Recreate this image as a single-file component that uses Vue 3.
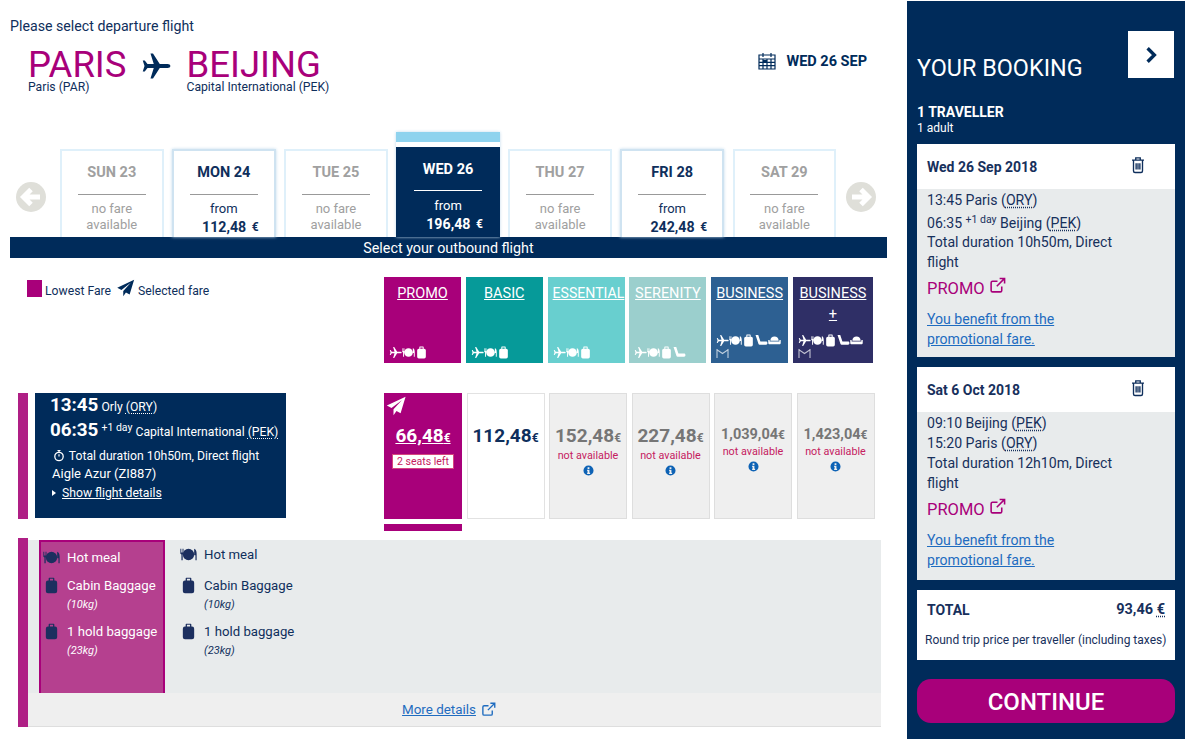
<script setup>
const days = [
  { label: 'SUN 23' },
  { label: 'MON 24', price: '112,48' },
  { label: 'TUE 25' },
  { label: 'WED 26', price: '196,48', active: true },
  { label: 'THU 27' },
  { label: 'FRI 28', price: '242,48' },
  { label: 'SAT 29' },
]

const fares = [
  { name: 'PROMO', cls: 'promo', icons: ['plane', 'meal', 'bag'] },
  { name: 'BASIC', cls: 'basic', icons: ['plane', 'meal', 'bag'] },
  { name: 'ESSENTIAL', cls: 'essential', icons: ['plane', 'meal', 'bag'] },
  { name: 'SERENITY', cls: 'serenity', icons: ['plane', 'meal', 'bag', 'seat'] },
  { name: 'BUSINESS', cls: 'business', icons: ['plane', 'meal', 'bag', 'seat', 'lounge'], crown: true },
  { name: 'BUSINESS', plus: true, cls: 'businessplus', icons: ['plane', 'meal', 'bag', 'seat', 'lounge'], crown: true },
]

const prices = [
  { value: '66,48', cls: 'selected', seats: '2 seats left' },
  { value: '112,48', cls: 'open' },
  { value: '152,48', cls: 'off' },
  { value: '227,48', cls: 'off' },
  { value: '1,039,04', cls: 'off small' },
  { value: '1,423,04', cls: 'off small' },
]

const extras = [
  { icon: 'meal', text: 'Hot meal' },
  { icon: 'bag', text: 'Cabin Baggage', sub: '(10kg)' },
  { icon: 'bag', text: '1 hold baggage', sub: '(23kg)' },
]

const legs = [
  { date: 'Wed 26 Sep 2018', from: '13:45 Paris', fromCode: 'ORY', to: '06:35', nextDay: true, toCity: 'Beijing', toCode: 'PEK', time: '10h50m' },
  { date: 'Sat 6 Oct 2018', from: '09:10 Beijing', fromCode: 'PEK', to: '15:20', toCity: 'Paris', toCode: 'ORY', time: '12h10m' },
]
</script>

<template>
  <svg class="defs" aria-hidden="true">
    <symbol id="plane" viewBox="0 0 24 24"><path d="M23.500 12c0-1-1-1.600-2.200-1.600H15L9.600 2H7.600l2.600 8.400H5.200L3 7.600H1.400L2.800 12 1.400 16.400H3l2.200-2.800h5L7.600 22h2L15 13.600h6.300c1.200 0 2.200-.6 2.200-1.600z" /></symbol>
    <symbol id="meal" viewBox="0 0 24 24"><circle cx="12" cy="12" r="8" /><path d="M.5 4h1v5h1V4h1v5h.8V4H5v7l-1.200 1v8H2v-8L.5 11zM20 4c2 0 3.500 3 3.500 7v9h-1.700v-7H20z" /></symbol>
    <symbol id="bag" viewBox="0 0 24 24"><path d="M9 1h6a1 1 0 0 1 1 1v3h1a3 3 0 0 1 3 3v12a3 3 0 0 1-3 3H7a3 3 0 0 1-3-3V8a3 3 0 0 1 3-3h1V2a1 1 0 0 1 1-1zm.8 1.600V5h4.400V2.600z" /></symbol>
    <symbol id="seat" viewBox="0 0 24 24"><path d="M1 2h5l4 12h10.500c1.500 0 2.500 1.200 2.500 2.800S22 20 20.500 20H8.500c-1 0-1.700-.5-2-1.400z" /></symbol>
    <symbol id="lounge" viewBox="0 0 24 24"><path d="M4.500 11c0-3.500 3.200-6.500 7.500-6.500s7.500 3 7.500 6.500v1.500h-15zM.5 11h2.500v3h18v-3h2.500v5.500c0 1.500-1 2.500-2.500 2.500H3c-1.500 0-2.500-1-2.500-2.500z" /></symbol>
    <symbol id="send" viewBox="0 0 24 24"><path d="M23.500 1 1 11.500l5.600 3L19 5 9 16v7l3.600-5 4.900 2.600z" /></symbol>
    <symbol id="ext" viewBox="0 0 24 24"><path d="M18 13.500V19a2 2 0 0 1-2 2H5a2 2 0 0 1-2-2V8a2 2 0 0 1 2-2h7M15 2h7v7M22 2 11 13" fill="none" stroke="currentColor" stroke-width="2.200" /></symbol>
    <symbol id="info" viewBox="0 0 24 24"><path fill-rule="evenodd" d="M12 1a11 11 0 1 0 0 22 11 11 0 0 0 0-22zm-2 4h4v3.500h-4zm-1 5.500h5V17h1.500v2.500h-6.500V17H10v-4H9z" /></symbol>
    <symbol id="trash" viewBox="0 0 24 24"><path d="M4 5.500h16M9 5V2.500h6V5M6 5.500V20a2 2 0 0 0 2 2h8a2 2 0 0 0 2-2V5.500M9.500 9.500V18M12 9.500V18M14.500 9.500V18" fill="none" stroke="currentColor" stroke-width="1.800" /></symbol>
  </svg>

  <div class="page">
    <main class="main">
      <p class="prompt">Please select departure flight</p>

      <header class="route">
        <div class="city">
          <h1>PARIS</h1>
          <span>Paris (PAR)</span>
        </div>
        <svg class="route-plane"><use href="#plane" /></svg>
        <div class="city">
          <h1>BEIJING</h1>
          <span>Capital International (PEK)</span>
        </div>
        <div class="route-date">
          <svg class="calendar" viewBox="0 0 18 18">
            <path d="M1 3h16v14H1zM1 7h16M5 1v4M13 1v4M1 10.300h16M1 13.600h16M5 7v10M9 7v10M13 7v10" fill="none" stroke="currentColor" stroke-width="1.200" />
            <rect x="5" y="8" width="4" height="3" fill="currentColor" />
          </svg>
          <b>WED 26 SEP</b>
        </div>
      </header>

      <section class="days">
        <div class="arrow">
          <svg viewBox="0 0 30 30"><path d="M24 15H9M15 7.500 7.500 15l7.500 7.500" fill="none" stroke="#fff" stroke-width="5" /></svg>
        </div>
        <div class="day-list">
          <div
            v-for="day in days"
            :key="day.label"
            class="day"
            :class="{ active: day.active, priced: day.price }"
          >
            <strong>{{ day.label }}</strong>
            <template v-if="day.price">
              <span class="from">from</span>
              <span class="amount">{{ day.price }} <small>€</small></span>
            </template>
            <span v-else class="nofare">no fare<br />available</span>
          </div>
        </div>
        <div class="arrow">
          <svg viewBox="0 0 30 30"><path d="M6 15h15M15 7.500l7.500 7.500-7.500 7.500" fill="none" stroke="#fff" stroke-width="5" /></svg>
        </div>
      </section>
      <div class="select-bar">Select your outbound flight</div>

      <section class="fare-head">
        <div class="legend">
          <i class="swatch"></i>
          <span>Lowest Fare</span>
          <svg class="legend-send"><use href="#send" /></svg>
          <span>Selected fare</span>
        </div>
        <div class="fare-tiles">
          <div v-for="fare in fares" :key="fare.cls" class="tile" :class="fare.cls">
            <span class="tile-name">{{ fare.name }}</span>
            <span v-if="fare.plus" class="tile-plus">+</span>
            <div class="tile-icons">
              <svg v-for="(ic, i) in fare.icons" :key="i" class="tile-icon"><use :href="'#' + ic" /></svg>
              <svg v-if="fare.crown" class="tile-crown" viewBox="0 0 14 12">
                <path d="M1 11V2l6 4 6-4v9M1 2h1M12 2h1" fill="none" stroke="currentColor" stroke-width="1.200" />
              </svg>
            </div>
          </div>
        </div>
      </section>

      <section class="flight">
        <i class="flight-mark"></i>
        <div class="flight-card">
          <div class="time-line"><b>13:45</b> <span>Orly <u class="code">(ORY)</u></span></div>
          <div class="time-line second">
            <b>06:35</b> <sup>+1 day</sup> <span>Capital International <u class="code">(PEK)</u></span>
          </div>
          <div class="flight-info total-line">
            <svg class="watch" viewBox="0 0 12 12">
              <circle cx="6" cy="7" r="4.200" fill="none" stroke="currentColor" stroke-width="1.300" />
              <path d="M4.500 1h3M6 1v2M6 7V4.800" fill="none" stroke="currentColor" stroke-width="1.200" />
            </svg>
            Total duration 10h50m, Direct flight
          </div>
          <div class="flight-info carrier">Aigle Azur (ZI887)</div>
          <div class="flight-more"><i class="caret"></i><u>Show flight details</u></div>
        </div>
        <div class="price-list">
          <div v-for="price in prices" :key="price.value" class="price-col">
            <div class="price" :class="price.cls">
              <svg v-if="price.seats" class="price-send"><use href="#send" /></svg>
              <div class="price-value">{{ price.value }}<small>€</small></div>
              <div v-if="price.seats" class="seats">{{ price.seats }}</div>
              <template v-if="price.cls.startsWith('off')">
                <div class="unavailable">not available</div>
                <svg class="info"><use href="#info" /></svg>
              </template>
            </div>
            <i v-if="price.seats" class="price-strip"></i>
          </div>
        </div>
      </section>

      <section class="detail">
        <i class="detail-mark"></i>
        <div class="detail-main">
          <div class="detail-cols">
            <div v-for="col in ['chosen', 'plain']" :key="col" class="extras" :class="col">
              <div v-for="extra in extras" :key="extra.text" class="extra">
                <svg class="extra-icon"><use :href="'#' + extra.icon" /></svg>
                <div>
                  <div class="extra-name">{{ extra.text }}</div>
                  <em v-if="extra.sub">{{ extra.sub }}</em>
                </div>
              </div>
            </div>
          </div>
          <div class="detail-foot">
            <u>More details</u>
            <svg class="foot-ext"><use href="#ext" /></svg>
          </div>
        </div>
      </section>
    </main>

    <aside class="side">
      <div class="side-top">
        <h2>YOUR BOOKING</h2>
        <button type="button" class="side-btn">
          <svg viewBox="0 0 16 16"><path d="m5 2 6 6-6 6" fill="none" stroke="currentColor" stroke-width="3" /></svg>
        </button>
      </div>
      <div class="traveller">1 TRAVELLER</div>
      <div class="adult">1 adult</div>

      <div v-for="leg in legs" :key="leg.date" class="leg">
        <div class="leg-head">
          <b>{{ leg.date }}</b>
          <svg class="trash"><use href="#trash" /></svg>
        </div>
        <div class="leg-body">
          <div>{{ leg.from }} (<span class="code">{{ leg.fromCode }}</span>)</div>
          <div class="leg-line" :class="{ 'next-day': leg.nextDay }">
            {{ leg.to }} <sup v-if="leg.nextDay">+1 day</sup> {{ leg.toCity }} (<span class="code">{{ leg.toCode }}</span>)
          </div>
          <div>Total duration {{ leg.time }}, Direct flight</div>
          <div class="leg-promo">PROMO <svg class="leg-ext"><use href="#ext" /></svg></div>
          <a class="leg-link">You benefit from the promotional fare.</a>
        </div>
      </div>

      <div class="total">
        <div class="total-row">
          <b>TOTAL</b>
          <b class="total-num">93,46 <span class="code">€</span></b>
        </div>
        <div class="total-note">Round trip price per traveller (including taxes)</div>
      </div>

      <button type="button" class="continue">CONTINUE</button>
    </aside>
  </div>
</template>

<style>
html, body { background: #fff; }
</style>

<style scoped>
.defs { position: absolute; width: 0; height: 0; }

.page {
  display: flex;
  width: 1200px;
  height: 739px;
  overflow: hidden;
  font-family: Roboto, "Liberation Sans", sans-serif;
  color: #0f2f5c;
  background: #fff;
}

.main {
  width: 907px;
  flex-shrink: 0;
  padding-left: 10px;
  box-sizing: border-box;
}

.prompt {
  margin: 18px 0 0;
  font-size: 14.200px;
  line-height: 17px;
}

.route {
  display: flex;
  align-items: flex-start;
  margin: 8px 20px 0 18px;
  height: 96px;
}

.city h1 {
  margin: 7px 0 0;
  font-size: 36.500px;
  line-height: 30px;
  font-weight: 400;
  color: #a8007a;
}

.city span {
  display: block;
  font-size: 12.200px;
  line-height: 14px;
}

.route-plane {
  width: 30px;
  height: 30px;
  margin: 8px 15px 0 15px;
  fill: #002b5a;
}

.route-date {
  margin-left: auto;
  margin-right: 20px;
  margin-top: 10px;
  display: flex;
  align-items: center;
  gap: 10px;
  font-size: 14.500px;
  color: #002b5a;
}

.calendar { width: 18px; height: 18px; margin-top: -2px; }

.days {
  display: flex;
  align-items: flex-end;
  margin-top: -7px;
}

.arrow {
  width: 30px;
  height: 30px;
  margin: 0 5px 25px 6px;
  border-radius: 50%;
  background: #dfdfd9;
  flex-shrink: 0;
}

.arrow svg { display: block; width: 30px; height: 30px; }

.day-list {
  display: flex;
  align-items: flex-end;
  gap: 8.600px;
  margin-left: 9px;
  margin-right: 4px;
}

.day {
  width: 103.500px;
  height: 88px;
  box-sizing: border-box;
  border: 2px solid #dff0fa;
  border-bottom: 0;
  padding-top: 13px;
  display: flex;
  flex-direction: column;
  align-items: center;
  color: #a0a0a0;
  font-size: 13px;
}

.day.priced {
  border-color: #cfe3f1;
  box-shadow: 0 0 3px #c2dbec;
  color: #0f2f5c;
}

.day strong {
  width: 68px;
  padding-bottom: 13px;
  margin-bottom: 6px;
  border-bottom: 1px solid #999;
  text-align: center;
  font-size: 14.500px;
  line-height: 17px;
  white-space: nowrap;
}

.nofare {
  text-align: center;
  line-height: 16px;
}

.from { line-height: 16px; }

.amount {
  padding-left: 13px;
  font-size: 14.200px;
  font-weight: 700;
  line-height: 21px;
  white-space: nowrap;
}

.amount small { font-size: 12px; vertical-align: 1px; margin-left: 2px; }

.day.active {
  height: 105px;
  border: 0;
  color: #fff;
  background: linear-gradient(#8fd3ee 0 10px, #fff 10px 15px, #002b5a 15px);
  padding-top: 29px;
}

.day.active strong {
  border-bottom-color: #fff;
  padding-bottom: 12px;
  margin-bottom: 7px;
}

.select-bar {
  width: 877px;
  height: 21px;
  overflow: hidden;
  background: #002b5a;
  color: #fff;
  text-align: center;
  font-size: 14.300px;
  line-height: 23px;
}

.fare-head {
  display: flex;
  margin-top: 19px;
}

.legend {
  width: 374px;
  box-sizing: border-box;
  padding-left: 17px;
  display: flex;
  align-items: flex-start;
  font-size: 12.200px;
  line-height: 15px;
  height: 20px;
}

.legend span { margin-top: 7px; }

.swatch {
  width: 15px;
  height: 17px;
  background: #a8007a;
  margin: 3px 3px 0 0;
}

.legend-send {
  width: 19px;
  height: 18px;
  fill: #002b5a;
  margin: 2px 3px 0 5px;
}

.fare-tiles {
  display: flex;
  gap: 4.800px;
}

.tile {
  width: 77px;
  height: 86px;
  box-sizing: border-box;
  display: flex;
  flex-direction: column;
  align-items: center;
  padding-top: 8px;
  color: #fff;
  overflow: hidden;
}

.tile:last-child { width: 80px; }

.tile-name {
  font-size: 14.500px;
  line-height: 17px;
  text-decoration: underline;
  white-space: nowrap;
}

.essential .tile-name {
  align-self: flex-start;
  margin-left: 5px;
  font-size: 14.100px;
}

.tile-plus {
  font-size: 14.500px;
  line-height: 20px;
  text-decoration: underline;
  margin-top: 3px;
}

.tile-icons {
  margin-top: auto;
  width: 100%;
  box-sizing: border-box;
  padding: 0 0 4px 5px;
  display: flex;
  flex-wrap: wrap;
  align-items: center;
}

.tile-icon { width: 13px; height: 13px; fill: #fff; }

.tile-crown {
  width: 13px;
  height: 11px;
  margin-top: 1px;
  color: #fff;
  opacity: 0.7;
  flex-basis: 13px;
}

.promo { background: #a8007a; }
.basic { background: #069a99; }
.essential { background: #68cfcf; }
.serenity { background: #9bcfcd; }
.business { background: #2d6092; }
.businessplus { background: #2f2f66; }

.flight {
  display: flex;
  align-items: flex-start;
  margin-top: 30px;
  margin-left: 8px;
}

.flight-mark {
  width: 10px;
  height: 126px;
  background: #af1f85;
  flex-shrink: 0;
}

.flight-card {
  width: 251px;
  height: 125px;
  box-sizing: border-box;
  margin-left: 7px;
  padding: 3px 0 0 15px;
  background: #002b5a;
  color: #fff;
  font-size: 12.200px;
  flex-shrink: 0;
}

.time-line {
  white-space: nowrap;
  line-height: 19px;
}

.time-line b { font-size: 18.800px; }

.time-line.second { margin-top: 4px; }

.time-line sup { font-size: 10.500px; vertical-align: 5px; line-height: 0; }

.code {
  text-decoration: underline dotted;
  text-underline-offset: 2px;
}

.flight-info { line-height: 18px; white-space: nowrap; }

.total-line { margin-top: 5px; }

.carrier {
  margin-left: 2px;
  font-size: 13px;
}

.watch {
  width: 12px;
  height: 13px;
  margin: 0 1px 0 3px;
  vertical-align: -2px;
}

.flight-more {
  margin-left: 2px;
  line-height: 20px;
  font-size: 12.200px;
}

.caret {
  display: inline-block;
  width: 0;
  height: 0;
  border-left: 4px solid #fff;
  border-top: 3.500px solid transparent;
  border-bottom: 3.500px solid transparent;
  margin: 0 6px 1px 0;
}

.price-list {
  display: flex;
  margin-left: 98px;
  gap: 4.500px;
}

.price-col { width: 78px; }

.price {
  height: 126px;
  box-sizing: border-box;
  position: relative;
  padding-top: 30px;
  text-align: center;
  border: 1px solid #e2e2e2;
}

.price.selected {
  background: #a8007a;
  border-color: #a8007a;
  color: #fff;
}

.price.open { background: #fff; color: #0f2f5c; }

.price.off { background: #efefef; color: #767676; border-color: #dedede; }

.price-value {
  font-size: 19px;
  font-weight: 700;
  line-height: 24px;
  white-space: nowrap;
}

.price-value small { font-size: 12px; }

.selected .price-value { text-decoration: underline; }

.price.small { padding-top: 29px; }

.small .price-value { font-size: 14.500px; }

.price-send {
  position: absolute;
  left: 1px;
  top: 2px;
  width: 20px;
  height: 20px;
  fill: #fff;
}

.seats {
  display: inline-block;
  margin-top: 1px;
  padding: 0 4px;
  background: #fff;
  border: 1px solid #d6457f;
  color: #c5205f;
  font-size: 10.500px;
  line-height: 13px;
  white-space: nowrap;
}

.unavailable {
  margin-top: -2px;
  color: #c5205f;
  font-size: 10.800px;
  line-height: 15px;
}

.small .unavailable { margin-top: -3px; }

.info {
  display: block;
  width: 11px;
  height: 11px;
  margin: 2px auto 0;
  fill: #0d62b5;
}

.price-strip {
  display: block;
  height: 7px;
  margin-top: 5px;
  background: #a8007a;
}

.detail {
  display: flex;
  margin-top: 7px;
  margin-left: 8px;
  height: 189px;
}

.detail-mark {
  width: 10px;
  background: #af1f85;
  flex-shrink: 0;
}

.detail-main {
  width: 853px;
  margin-top: 2px;
  display: flex;
  flex-direction: column;
}

.detail-cols {
  display: flex;
  height: 153px;
  background: #e8ebec;
  padding-left: 11px;
}

.extras {
  box-sizing: border-box;
  width: 126px;
}

.extras.chosen {
  border: 2px solid #a8007a;
  border-bottom: 0;
  background: #b5408f;
  color: #fff;
  padding: 6px 0 0 2px;
}

.extras.plain {
  padding: 5px 0 0 15px;
  width: 170px;
}

.extra {
  display: flex;
  gap: 7px;
  margin-bottom: 8px;
}

.extra:first-child { margin-bottom: 9px; }

.plain .extra:first-child { margin-bottom: 12px; }

.extra-icon {
  width: 17px;
  height: 17px;
  fill: #1c2f5f;
  margin-top: 1px;
  flex-shrink: 0;
}

.extra-name {
  font-size: 13.200px;
  line-height: 19px;
  white-space: nowrap;
}

.extra em {
  display: block;
  font-size: 11px;
  line-height: 19px;
}

.detail-foot {
  height: 34px;
  padding-right: 11px;
  background: #efefef;
  border-bottom: 1px solid #dedede;
  box-sizing: border-box;
  display: flex;
  align-items: center;
  justify-content: center;
  color: #1f6cc0;
  font-size: 13.400px;
  gap: 5px;
}

.foot-ext { width: 15px; height: 15px; color: #1f6cc0; }

.side {
  width: 278px;
  height: 738px;
  margin-top: 1px;
  flex-shrink: 0;
  box-sizing: border-box;
  padding: 30px 10px 0;
  background: #002b5a;
  color: #fff;
}

.side-top {
  display: flex;
  justify-content: space-between;
  align-items: flex-start;
  height: 73px;
}

.side-top h2 {
  margin: 23px 0 0;
  font-size: 23.400px;
  line-height: 28px;
  font-weight: 400;
}

.side-btn {
  width: 46px;
  height: 47px;
  margin-right: 1px;
  border: 0;
  padding: 14px;
  background: #fff;
  color: #002b5a;
}

.side-btn svg { display: block; width: 18px; height: 18px; }

.traveller {
  font-size: 14px;
  font-weight: 700;
  line-height: 16px;
}

.adult {
  font-size: 12px;
  line-height: 16px;
  margin-bottom: 8px;
}

.leg {
  margin-bottom: 10px;
  color: #17305c;
}

.leg-head {
  height: 45px;
  box-sizing: border-box;
  padding: 0 28px 0 10px;
  display: flex;
  align-items: center;
  justify-content: space-between;
  background: #fff;
  font-size: 14px;
}

.trash { width: 18px; height: 18px; color: #0f2f5c; margin-bottom: 4px; }

.leg-body {
  height: 168px;
  box-sizing: border-box;
  padding: 1px 30px 0 10px;
  background: #e8ebec;
  font-size: 14.100px;
  line-height: 20px;
}

.leg-line { white-space: nowrap; }

.leg-line.next-day {
  margin-top: 3px;
  margin-bottom: -1px;
}

.leg-line sup { font-size: 10.500px; vertical-align: 5px; line-height: 0; }

.leg-promo {
  margin-top: 5px;
  color: #a8007a;
  font-size: 16.500px;
  line-height: 22px;
}

.leg-ext { width: 17px; height: 17px; color: #a8007a; vertical-align: 0; }

.leg-link {
  display: block;
  max-width: 170px;
  margin-top: 9px;
  color: #1f6cc0;
  text-decoration: underline;
}

.total {
  height: 70px;
  box-sizing: border-box;
  padding: 12px 10px 0 10px;
  background: #fff;
  color: #17305c;
}

.total-row {
  display: flex;
  justify-content: space-between;
  font-size: 14px;
  line-height: 16px;
}

.total-num { font-size: 14.500px; }

.total-note {
  margin: 14px -10px 0 -2px;
  font-size: 12px;
  line-height: 16px;
  white-space: nowrap;
}

.continue {
  display: block;
  width: 258px;
  height: 44px;
  margin-top: 19px;
  border: 0;
  border-radius: 14px;
  padding-top: 2px;
  background: #a8007a;
  color: #fff;
  font-family: inherit;
  font-size: 24px;
  font-weight: 500;
}
</style>
